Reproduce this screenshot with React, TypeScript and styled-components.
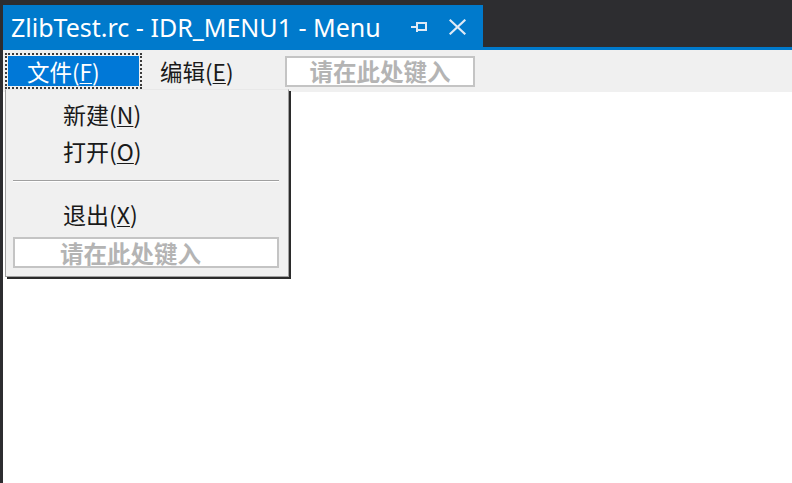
import React from "react";
import styled, { createGlobalStyle } from "styled-components";

const GlobalStyle = createGlobalStyle`
  html, body {
    margin: 0;
    padding: 0;
    background: #2d2d30;
    overflow: hidden;
  }
`;

const Frame = styled.div`
  width: 792px;
  height: 483px;
  display: flex;
  flex-direction: column;
  padding-left: 3px;
  box-sizing: border-box;
  background: #2d2d30;
`;

const TabStrip = styled.div`
  height: 47px;
  padding-top: 5px;
  box-sizing: border-box;
  display: flex;
`;

const DocTab = styled.div`
  width: 480px;
  background: #007acc;
  display: flex;
  align-items: center;
  padding: 0 0 0 8px;
  box-sizing: border-box;
`;

const TabTitle = styled.span`
  color: #fff;
  font-family: "Noto Sans", "Open Sans", sans-serif;
  font-size: 25px;
  white-space: nowrap;
  margin-top: 1px;
`;

const TabIcons = styled.div`
  display: flex;
  align-items: center;
  gap: 22px;
  margin-left: 30px;
  margin-top: 2px;
`;

const AccentLine = styled.div`
  height: 3px;
  background: #007acc;
`;

const Designer = styled.div`
  flex: 1;
  background: #fff;
  position: relative;
  font-family: "Noto Sans CJK SC", "Noto Sans", sans-serif;
`;

const MenuBar = styled.div`
  height: 42px;
  background: #f0f0f0;
  display: flex;
  align-items: center;
  padding-left: 2px;
`;

const TopItem = styled.div<{ $active?: boolean; $width: number }>`
  width: ${(p) => p.$width}px;
  height: 36px;
  box-sizing: border-box;
  border: 2px dotted ${(p) => (p.$active ? "#3a3a3a" : "transparent")};
  padding: 1px;
  display: flex;
`;

const TopLabel = styled.div<{ $active?: boolean; $indent: number }>`
  flex: 1;
  display: flex;
  align-items: center;
  padding-left: ${(p) => p.$indent}px;
  background: ${(p) => (p.$active ? "#0078d7" : "transparent")};
  color: ${(p) => (p.$active ? "#fff" : "#1a1a1a")};
  font-size: 22.5px;
  white-space: nowrap;
`;

const Key = styled.u`
  text-decoration-thickness: 1px;
  text-underline-offset: 2px;
`;

const TypeHere = styled.div<{ $center?: boolean }>`
  height: 31px;
  box-sizing: border-box;
  border: 2px solid #c4c4c4;
  background: #fff;
  color: #b4b4b4;
  font-size: 23.5px;
  font-weight: 700;
  display: flex;
  align-items: center;
  justify-content: ${(p) => (p.$center ? "center" : "flex-start")};
  padding-left: ${(p) => (p.$center ? 0 : 45)}px;
  white-space: nowrap;
`;

const BarTypeHere = styled(TypeHere)`
  width: 190px;
`;

const Dropdown = styled.div`
  position: absolute;
  left: 2px;
  top: 39px;
  width: 284px;
  box-sizing: border-box;
  background: #f0f0f0;
  border: 1px solid #a0a0a0;
  border-top-color: #e8e8e8;
  box-shadow: 2px 2px 0 #2b2b2b;
  padding: 5px 9px 8px 7px;
  display: flex;
  flex-direction: column;
`;

const DropItem = styled.div`
  height: 37px;
  display: flex;
  align-items: center;
  padding-left: 50px;
  font-size: 23px;
  color: #1a1a1a;
  white-space: nowrap;
`;

const Separator = styled.div`
  height: 1px;
  background: #a0a0a0;
  border-bottom: 1px solid #fff;
  margin: 11px 0 13px;
`;

const DropTypeHere = styled(TypeHere)`
  margin-top: 5px;
`;

const PinIcon = () => (
  <svg width="16" height="12" viewBox="0 0 16 12">
    <g fill="none" stroke="#dfeaf6" strokeWidth="2">
      <line x1="0" y1="6" x2="6" y2="6" />
      <line x1="6" y1="1" x2="6" y2="11" />
      <rect x="6" y="2" width="9" height="7" />
    </g>
  </svg>
);

const CloseIcon = () => (
  <svg width="17" height="16" viewBox="0 0 17 16">
    <g stroke="#dfeaf6" strokeWidth="2.2" strokeLinecap="square">
      <line x1="1.5" y1="1.5" x2="15.5" y2="14.5" />
      <line x1="15.5" y1="1.5" x2="1.5" y2="14.5" />
    </g>
  </svg>
);

export default function App() {
  return (
    <Frame>
      <GlobalStyle />
      <TabStrip>
        <DocTab>
          <TabTitle>ZlibTest.rc - IDR_MENU1 - Menu</TabTitle>
          <TabIcons>
            <PinIcon />
            <CloseIcon />
          </TabIcons>
        </DocTab>
      </TabStrip>
      <AccentLine />
      <Designer>
        <MenuBar>
          <TopItem $active $width={137}>
            <TopLabel $active $indent={19}>
              文件(<Key>F</Key>)
            </TopLabel>
          </TopItem>
          <TopItem $width={143}>
            <TopLabel $indent={15}>
              编辑(<Key>E</Key>)
            </TopLabel>
          </TopItem>
          <BarTypeHere $center>请在此处键入</BarTypeHere>
        </MenuBar>
        <Dropdown>
          <DropItem>
            新建(<Key>N</Key>)
          </DropItem>
          <DropItem>
            打开(<Key>O</Key>)
          </DropItem>
          <Separator />
          <DropItem>
            退出(<Key>X</Key>)
          </DropItem>
          <DropTypeHere>请在此处键入</DropTypeHere>
        </Dropdown>
      </Designer>
    </Frame>
  );
}
